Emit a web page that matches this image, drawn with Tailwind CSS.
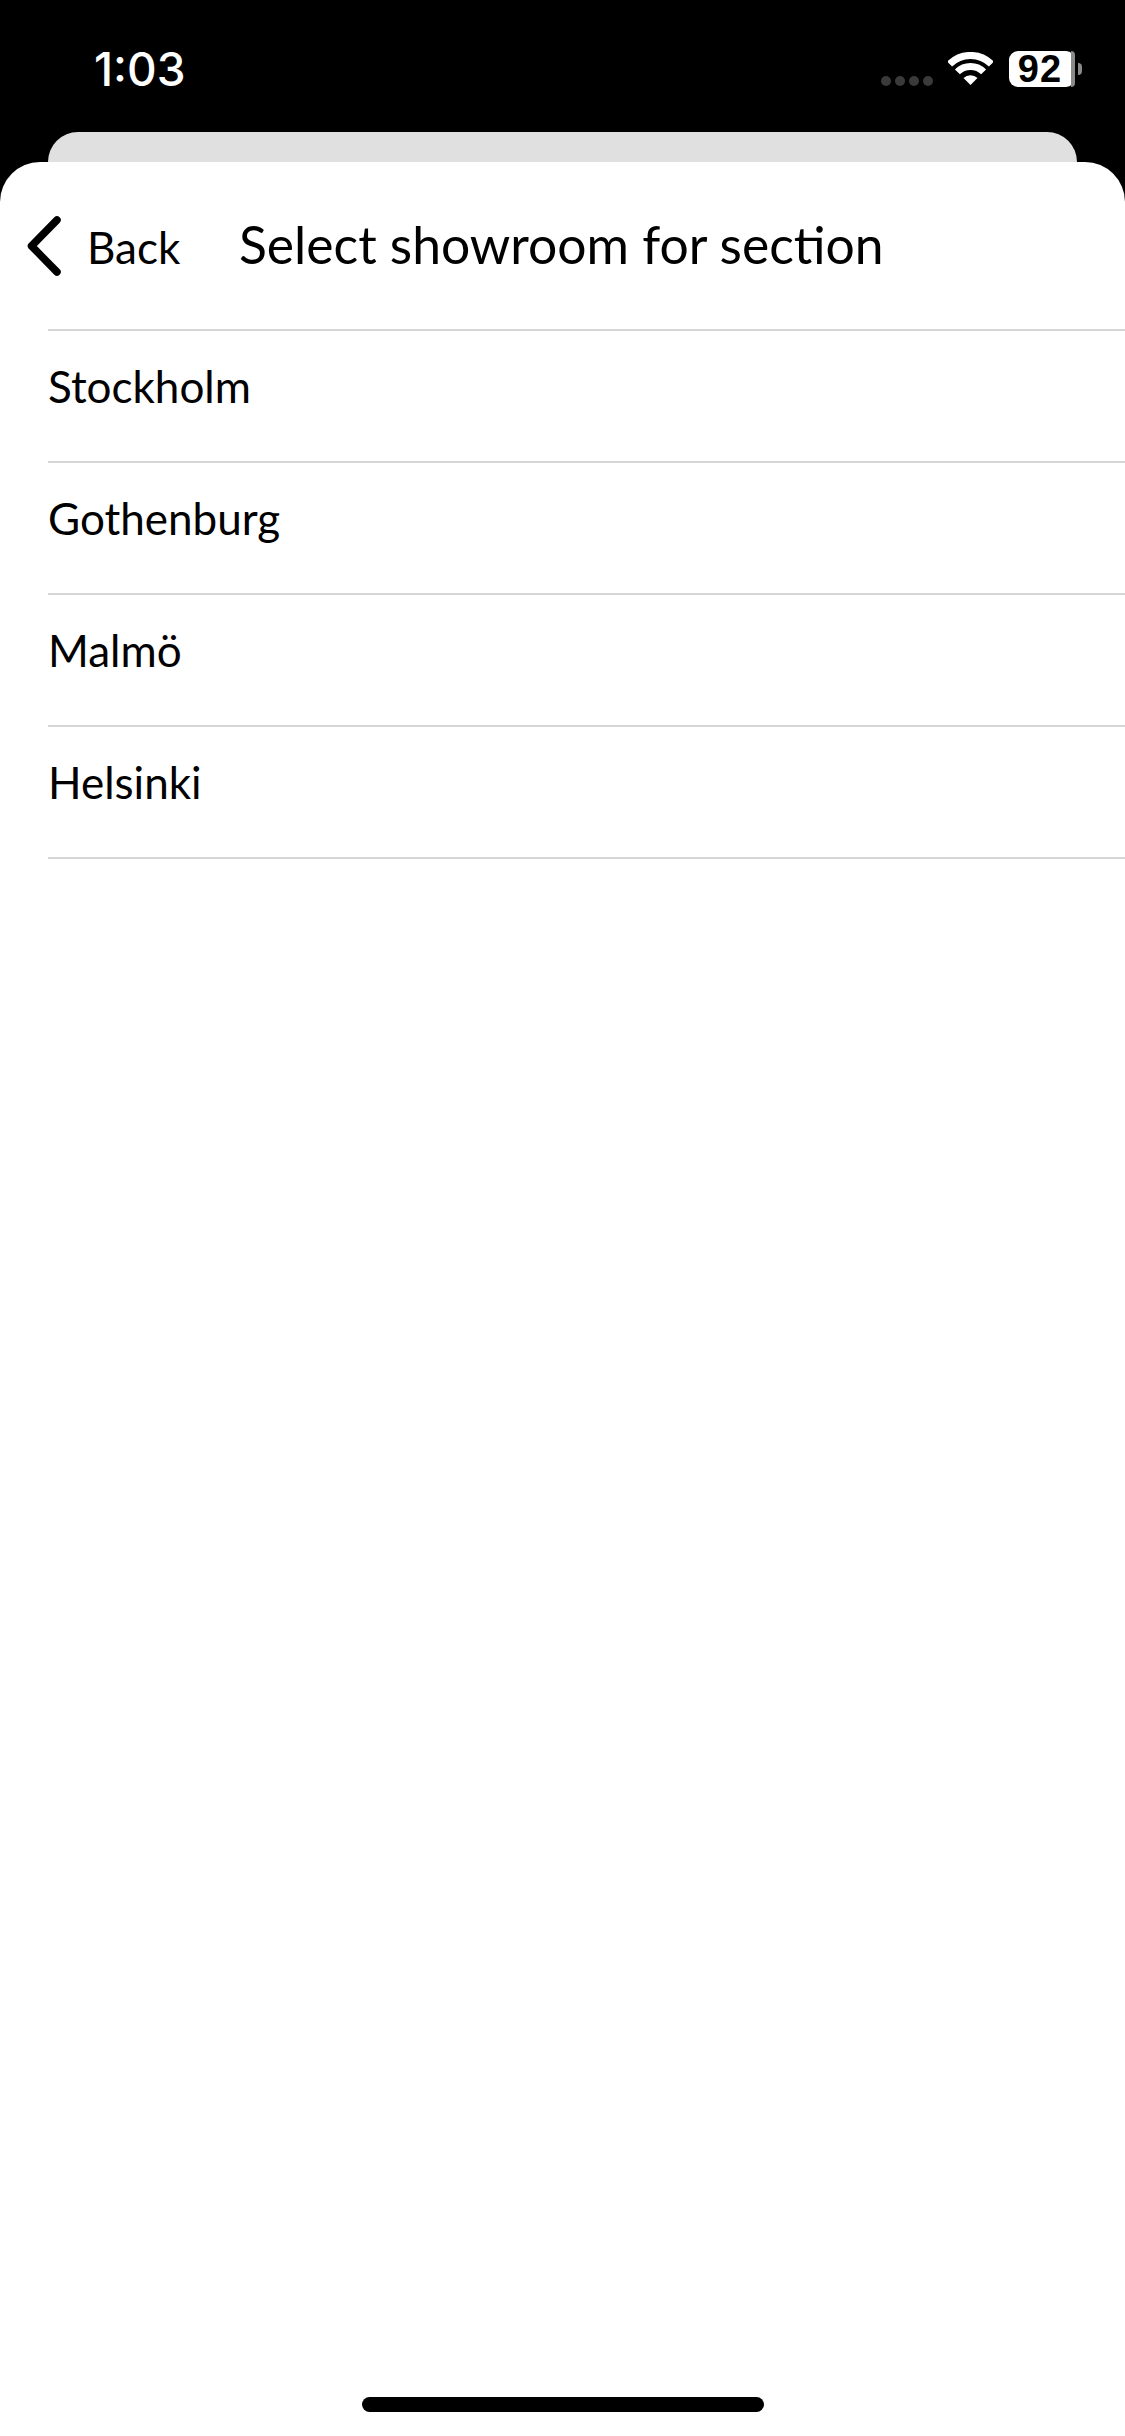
<!DOCTYPE html>
<html lang="en">

<head>
  <meta charset="UTF-8" />
  <meta name="viewport" content="width=device-width, initial-scale=1.0" />
  <script src="https://cdn.jsdelivr.net/npm/@tailwindcss/browser@4"></script>
  <title>Select showroom</title>
</head>

<body class="bg-black">
  <div class="w-[1125px] h-[2436px] flex flex-col overflow-hidden relative font-['Lato',sans-serif] text-black">
    <!-- status bar -->
    <div class="h-[132px] shrink-0 flex items-start justify-between pl-[94px] pr-[43px] pt-[41px]">
      <span class="text-white text-[46px] leading-[56px] font-medium font-['Inter',sans-serif]">1:03</span>
      <div class="flex items-start pt-[10px]">
        <div class="flex gap-[4px] mt-[25px] mr-[15px]">
          <span class="w-[10px] h-[10px] rounded-full bg-[#3a3a3a]"></span>
          <span class="w-[10px] h-[10px] rounded-full bg-[#3a3a3a]"></span>
          <span class="w-[10px] h-[10px] rounded-full bg-[#3a3a3a]"></span>
          <span class="w-[10px] h-[10px] rounded-full bg-[#3a3a3a]"></span>
        </div>
        <svg class="mt-[1px] mr-[16px]" width="45" height="33" viewBox="0 0 45 33" fill="none">
          <path d="M1.6 12.1 A29.5 29.5 0 0 1 43.4 12.1" stroke="#fff" stroke-width="7" />
          <path d="M9.4 19.9 A18.5 18.5 0 0 1 35.6 19.9" stroke="#fff" stroke-width="7" />
          <path d="M22.5 33 L15.5 26 A10 10 0 0 1 29.5 26 Z" fill="#fff" />
        </svg>
        <div class="w-[66px] h-[36px] rounded-[9px] bg-white flex">
          <span class="w-[62px] text-center text-[38px] leading-[36px] tracking-[1px] font-bold font-['Liberation_Sans',sans-serif]">92</span>
          <span class="w-[4px] h-full rounded-r-[9px] bg-[#8a8a8a]"></span>
        </div>
        <span class="w-[4px] h-[12px] mt-[12px] ml-[3px] rounded-r-full bg-[#8a8a8a]"></span>
      </div>
    </div>

    <!-- card behind -->
    <div class="h-[30px] shrink-0 mx-[48px] bg-[#e0e0e0] rounded-t-[36px]"></div>

    <!-- sheet -->
    <div class="flex-1 bg-white rounded-t-[40px] flex flex-col">
      <div class="h-[167px] shrink-0 flex items-center relative">
        <svg class="absolute left-[24px] top-[52px]" width="40" height="64" viewBox="0 0 40 64" fill="none">
          <path d="M33 6 L7.5 32 L33 58" stroke="#000" stroke-width="7.5" stroke-linecap="round" stroke-linejoin="round" />
        </svg>
        <span class="ml-[87px] mt-[3px] w-[152px] text-[44px] leading-[52px]">Back</span>
        <span class="text-[51.6px] leading-[60px] -mt-[4px]">Select showroom for section</span>
      </div>

      <ul class="ml-[48px] border-t-2 border-[#d6d6d6]">
        <li class="h-[132px] pb-[20px] flex items-center border-b-2 border-[#d6d6d6] text-[44px]">Stockholm</li>
        <li class="h-[132px] pb-[20px] flex items-center border-b-2 border-[#d6d6d6] text-[44px]">Gothenburg</li>
        <li class="h-[132px] pb-[20px] flex items-center border-b-2 border-[#d6d6d6] text-[44px]">Malmö</li>
        <li class="h-[132px] pb-[20px] flex items-center border-b-2 border-[#d6d6d6] text-[44px]">Helsinki</li>
      </ul>
    </div>

    <!-- home indicator -->
    <div class="absolute left-[362px] top-[2397px] w-[402px] h-[15px] rounded-full bg-black"></div>
  </div>
</body>

</html>
